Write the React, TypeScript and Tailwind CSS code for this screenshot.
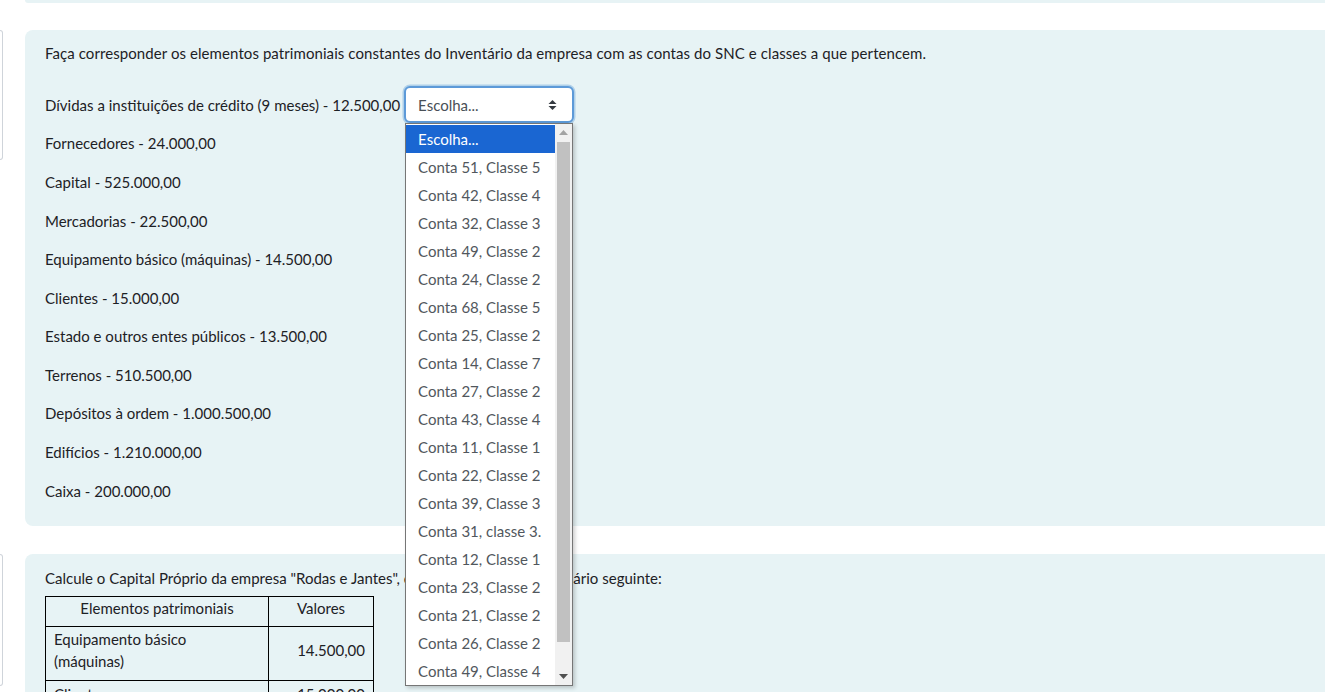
import React from "react";

const rows = [
  "Dívidas a instituições de crédito (9 meses) - 12.500,00",
  "Fornecedores - 24.000,00",
  "Capital - 525.000,00",
  "Mercadorias - 22.500,00",
  "Equipamento básico (máquinas) - 14.500,00",
  "Clientes - 15.000,00",
  "Estado e outros entes públicos - 13.500,00",
  "Terrenos - 510.500,00",
  "Depósitos à ordem - 1.000.500,00",
  "Edifícios - 1.210.000,00",
  "Caixa - 200.000,00",
];

const options = [
  "Escolha...",
  "Conta 51, Classe 5",
  "Conta 42, Classe 4",
  "Conta 32, Classe 3",
  "Conta 49, Classe 2",
  "Conta 24, Classe 2",
  "Conta 68, Classe 5",
  "Conta 25, Classe 2",
  "Conta 14, Classe 7",
  "Conta 27, Classe 2",
  "Conta 43, Classe 4",
  "Conta 11, Classe 1",
  "Conta 22, Classe 2",
  "Conta 39, Classe 3",
  "Conta 31, classe 3.",
  "Conta 12, Classe 1",
  "Conta 23, Classe 2",
  "Conta 21, Classe 2",
  "Conta 26, Classe 2",
  "Conta 49, Classe 4",
];

function SelectArrows() {
  return (
    <svg width="9" height="12" viewBox="0 0 9 12" className="shrink-0">
      <path d="M4.5 1 L8.5 5 L0.5 5 Z" fill="#343a40" />
      <path d="M4.5 11 L8.5 7 L0.5 7 Z" fill="#343a40" />
    </svg>
  );
}

function Dropdown() {
  return (
    <div className="absolute left-[1px] top-[37px] z-10 w-[168px] h-[563px] bg-white border border-[#767676] shadow-[2px_2px_4px_rgba(0,0,0,0.2)] flex">
      <div className="flex-1 flex flex-col pt-[1px]">
        {options.map((o, i) => (
          <div
            key={i}
            className={
              "h-[28px] flex items-center pl-[12px] text-[15px] " +
              (i === 0 ? "bg-[#1a66d2] text-white" : "text-[#51575d]")
            }
          >
            {o}
          </div>
        ))}
      </div>
      <div className="w-[17px] bg-[#f1f1f1] flex flex-col items-center">
        <div className="h-[17px] flex items-center justify-center">
          <svg width="9" height="5" viewBox="0 0 9 5">
            <path d="M4.5 0 L9 5 L0 5 Z" fill="#a3a3a3" />
          </svg>
        </div>
        <div className="w-[13px] h-[500px] bg-[#c1c1c1] mt-[1px]" />
        <div className="flex-1" />
        <div className="h-[17px] flex items-center justify-center">
          <svg width="9" height="5" viewBox="0 0 9 5">
            <path d="M0 0 L9 0 L4.5 5 Z" fill="#505050" />
          </svg>
        </div>
      </div>
    </div>
  );
}

function InfoBox({ h }: { h: string }) {
  return (
    <div className="w-[25px] shrink-0">
      <div className={"w-[3px] border-y border-r border-[#cfd4da] rounded-r-[3px] bg-white " + h} />
    </div>
  );
}

export default function App() {
  return (
    <div
      className="w-[1325px] h-[692px] overflow-hidden bg-white text-[#1d2125] text-[15px]"
      style={{ fontFamily: '"Segoe UI", Lato, "Noto Sans", sans-serif' }}
    >
      {/* top panel remainder */}
      <div className="flex">
        <div className="w-[25px] shrink-0" />
        <div className="flex-1 h-[3px] bg-[#e7f3f5] rounded-bl-[8px]" />
      </div>

      {/* question 2 */}
      <div className="flex mt-[27px]">
        <InfoBox h="h-[130px]" />
        <div className="flex-1 h-[496px] bg-[#e7f3f5] rounded-l-[8px] pt-[12px] pl-[20px]">
          <p className="leading-[22px] tracking-[0.08px]">
            Faça corresponder os elementos patrimoniais constantes do Inventário da empresa com as contas do SNC e classes a que pertencem.
          </p>
          <div className="mt-[21.7px] flex flex-col">
            {rows.map((r, i) => (
              <div key={i} className="h-[38.6px] flex items-center">
                <span>{r}</span>
                {i === 0 && (
                  <div className="relative ml-[4px]">
                    <div className="w-[170px] h-[37px] bg-white border-[2px] border-[#5d9ad8] rounded-[6px] shadow-[0_0_0_1.5px_rgba(93,154,216,0.4)] flex items-center justify-between pl-[12px] pr-[15px] text-[#495057]">
                      <span>Escolha...</span>
                      <SelectArrows />
                    </div>
                    <Dropdown />
                  </div>
                )}
              </div>
            ))}
          </div>
        </div>
      </div>

      {/* question 3 */}
      <div className="flex mt-[28px]">
        <InfoBox h="h-[132px]" />
        <div className="flex-1 h-[200px] bg-[#e7f3f5] rounded-l-[8px] pt-[13px] pl-[20px]">
          <p className="leading-[22px]">
            Calcule o Capital Próprio da empresa "Rodas e Jantes",{" "}
            <span className="tracking-[1.15px]">considerando o invent</span>ário seguinte:
          </p>
          <table className="mt-[7px] border-collapse">
            <tbody>
              <tr>
                <td className="border border-black w-[223px] h-[30px] text-center leading-[22px] pb-[7px]">Elementos patrimoniais</td>
                <td className="border border-black w-[105px] text-center leading-[22px] pb-[7px]">Valores</td>
              </tr>
              <tr>
                <td className="border border-black h-[54px] pl-[8px] pr-[8px] leading-[22px] pb-[7px]">
                  Equipamento básico
                  <br />
                  (máquinas)
                </td>
                <td className="border border-black text-right pr-[8px] leading-[22px] pb-[7px]">14.500,00</td>
              </tr>
              <tr>
                <td className="border border-black h-[30px] pl-[8px] leading-[22px] align-top pt-[2px]">Clientes</td>
                <td className="border border-black text-right pr-[8px] leading-[22px] align-top pt-[2px]">15.000,00</td>
              </tr>
            </tbody>
          </table>
        </div>
      </div>
    </div>
  );
}
